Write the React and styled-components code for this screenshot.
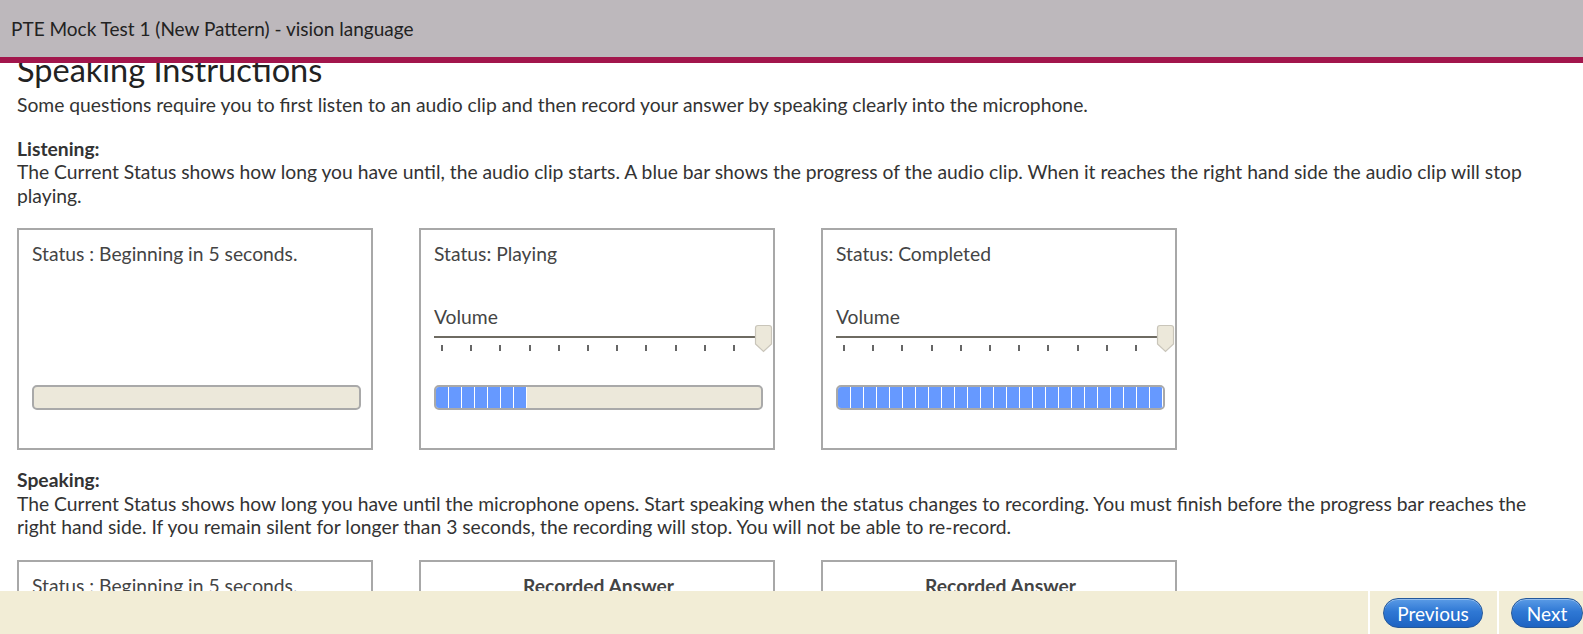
import React, { useLayoutEffect, useRef } from "react";
import styled, { createGlobalStyle } from "styled-components";

const GlobalStyle = createGlobalStyle`
  html, body {
    margin: 0;
    padding: 0;
    height: 100%;
    overflow: hidden;
  }
  body {
    font-family: Lato, "Open Sans", sans-serif;
    color: #333;
  }
  #root {
    height: 100%;
  }
`;

const Page = styled.div`
  height: 100vh;
  display: flex;
  flex-direction: column;
`;

const Header = styled.header`
  flex: none;
  height: 57px;
  background: #bdb8bc;
  border-bottom: 6px solid #a2164c;
  display: flex;
  align-items: center;
  padding-left: 11px;
  font-size: 19px;
  color: #222;
`;

const Scroller = styled.div`
  flex: 1;
  overflow-y: scroll;

  &::-webkit-scrollbar {
    width: 6px;
  }
  &::-webkit-scrollbar-track {
    background: #f0f0f0;
  }
  &::-webkit-scrollbar-thumb {
    background: #c1c1c1;
    border-left: 2px solid #f0f0f0;
  }
`;

const Content = styled.div`
  padding: 44px 40px 154px 17px;
  font-size: 19.3px;
  line-height: 23.5px;
`;

const Title = styled.h1`
  margin: 0 0 4px;
  font-size: 32.5px;
  line-height: 38px;
  font-weight: 400;
  color: #222;
`;

const Paragraph = styled.p`
  margin: 0 0 20px;
`;

const Label = styled.strong`
  display: block;
  font-weight: 700;
`;

const SectionText = styled.div``;

const BoxRow = styled.div`
  display: flex;
  gap: 46px;
  margin: 21px 0 18px;
`;

const StatusBox = styled.div`
  width: 356px;
  height: 222px;
  box-sizing: border-box;
  border: 2px solid #a8a8a8;
  padding: 12px 10px 38px 13px;
  display: flex;
  flex-direction: column;
  color: #444;
`;

const StatusText = styled.div`
  text-align: ${(p) => (p.$center ? "center" : "left")};
  font-weight: ${(p) => (p.$bold ? 700 : 400)};
`;

const VolumeLabel = styled.div`
  margin-top: 39px;
`;

const Slider = styled.div`
  position: relative;
  width: 323px;
  height: 2px;
  margin-top: 8px;
  background: #6e6b62;
`;

const Thumb = styled.svg`
  position: absolute;
  left: 320px;
  top: -12px;
  width: 19px;
  height: 29px;
`;

const Ticks = styled.div`
  display: flex;
  gap: 27.2px;
  padding-left: 7px;
  margin-top: 7px;
`;

const Tick = styled.span`
  width: 2px;
  height: 6px;
  background: #666;
`;

const Bar = styled.div`
  margin-top: auto;
  width: 329px;
  height: 25px;
  box-sizing: border-box;
  border: 2px solid #a9a9a9;
  border-radius: 5px;
  background: #ece8da;
  display: flex;
  overflow: hidden;
`;

const Segment = styled.span`
  flex: none;
  width: 12px;
  height: 100%;
  background: #6699ff;
  border-right: 1px solid #fff;
`;

const Footer = styled.footer`
  flex: none;
  height: 43px;
  background: #f2edd6;
  display: flex;
  justify-content: flex-end;
`;

const FooterCell = styled.div`
  box-sizing: border-box;
  width: ${(p) => p.$w}px;
  border-left: 2px solid #fff;
  padding: 7px 0 0 ${(p) => p.$pad}px;
  overflow: hidden;
`;

const NavButton = styled.button`
  width: ${(p) => p.$w}px;
  height: 30px;
  border-radius: 15px;
  border: 1px solid #24589a;
  background: linear-gradient(#5a9be6 0%, #2f78d4 45%, #1d63c2 100%);
  color: #fff;
  font-family: Lato, "Open Sans", sans-serif;
  font-size: 19px;
  padding: 0;
  box-shadow: inset 0 1px 0 rgba(255, 255, 255, 0.35);
  cursor: pointer;
`;

const SliderThumb = () => (
  <Thumb viewBox="0 0 19 29">
    <path
      d="M4 1.5 H15 Q17.5 1.5 17.5 4 V20 L9.5 27.5 L1.5 20 V4 Q1.5 1.5 4 1.5 Z"
      fill="#ece8da"
      stroke="#c9c5ba"
      strokeWidth="1.2"
    />
  </Thumb>
);

const Volume = () => (
  <>
    <VolumeLabel>Volume</VolumeLabel>
    <Slider>
      <SliderThumb />
    </Slider>
    <Ticks>
      {Array.from({ length: 11 }).map((_, i) => (
        <Tick key={i} />
      ))}
    </Ticks>
  </>
);

const ProgressBar = ({ filled }) => (
  <Bar>
    {Array.from({ length: filled }).map((_, i) => (
      <Segment key={i} />
    ))}
  </Bar>
);

const App = () => {
  const scrollRef = useRef(null);

  useLayoutEffect(() => {
    if (scrollRef.current) scrollRef.current.scrollTop = 56;
  }, []);

  return (
    <Page>
      <GlobalStyle />
      <Header>PTE Mock Test 1 (New Pattern) - vision language</Header>
      <Scroller ref={scrollRef}>
        <Content>
          <Title>Speaking Instructions</Title>
          <Paragraph>
            Some questions require you to first listen to an audio clip and then record your
            answer by speaking clearly into the microphone.
          </Paragraph>

          <SectionText>
            <Label>Listening:</Label>
            The Current Status shows how long you have until, the audio clip starts. A blue bar
            shows the progress of the audio clip. When it reaches the right hand side the audio
            clip will stop playing.
          </SectionText>
          <BoxRow>
            <StatusBox>
              <StatusText>Status : Beginning in 5 seconds.</StatusText>
              <ProgressBar filled={0} />
            </StatusBox>
            <StatusBox>
              <StatusText>Status: Playing</StatusText>
              <Volume />
              <ProgressBar filled={7} />
            </StatusBox>
            <StatusBox>
              <StatusText>Status: Completed</StatusText>
              <Volume />
              <ProgressBar filled={25} />
            </StatusBox>
          </BoxRow>

          <SectionText>
            <Label>Speaking:</Label>
            The Current Status shows how long you have until the microphone opens. Start speaking
            when the status changes to recording. You must finish before the progress bar reaches
            the right hand side. If you remain silent for longer than 3 seconds, the recording will
            stop. You will not be able to re-record.
          </SectionText>
          <BoxRow>
            <StatusBox>
              <StatusText>Status : Beginning in 5 seconds.</StatusText>
              <ProgressBar filled={0} />
            </StatusBox>
            <StatusBox>
              <StatusText $center $bold>
                Recorded Answer
              </StatusText>
              <ProgressBar filled={0} />
            </StatusBox>
            <StatusBox>
              <StatusText $center $bold>
                Recorded Answer
              </StatusText>
              <ProgressBar filled={25} />
            </StatusBox>
          </BoxRow>
        </Content>
      </Scroller>
      <Footer>
        <FooterCell $w={129} $pad={13}>
          <NavButton $w={100}>Previous</NavButton>
        </FooterCell>
        <FooterCell $w={86} $pad={12}>
          <NavButton $w={72}>Next</NavButton>
        </FooterCell>
      </Footer>
    </Page>
  );
};

export default App;
